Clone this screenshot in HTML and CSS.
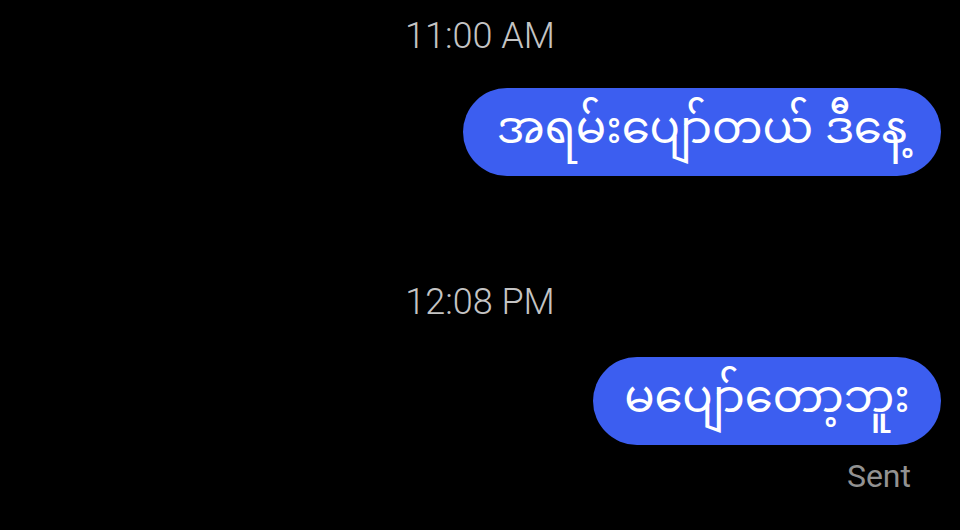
FILE: index.html
```html
<!DOCTYPE html>
<html lang="my">
<head>
    <meta charset="UTF-8">
    <meta name="viewport" content="width=device-width, initial-scale=1.0">
    <title>Messages</title>
    <link rel="stylesheet" href="styles.css">
</head>
<body>
    <div class="thread">
        <div class="time first">11:00 AM</div>
        <div class="row">
            <div class="bubble wide">အရမ်းပျော်တယ် ဒီနေ့</div>
        </div>
        <div class="time second">12:08 PM</div>
        <div class="row">
            <div class="bubble narrow">မပျော်တော့ဘူး</div>
        </div>
        <div class="status">Sent</div>
    </div>
</body>
</html>
```

FILE: styles.css
```css
body {
    margin: 0;
    padding: 0;
    background-color: #000;
    font-family: Roboto, "Liberation Sans", sans-serif;
    width: 960px;
    height: 530px;
    overflow: hidden;
}
.thread {
    display: flex;
    flex-direction: column;
}
.time {
    text-align: center;
    color: #c4c4c4;
    font-size: 36px;
    font-weight: 300;
    line-height: 40px;
}
.first {
    margin-top: 16px;
    margin-bottom: 32px;
}
.second {
    margin-top: 106px;
    margin-bottom: 35px;
}
.row {
    display: flex;
    justify-content: flex-end;
    padding-right: 19px;
}
.bubble {
    background-color: #3c5ef0;
    color: #fff;
    font-family: "Noto Sans Myanmar", "Padauk", "Myanmar Text", "Noto Sans", sans-serif;
    font-size: 45px;
    height: 88px;
    border-radius: 44px;
    display: flex;
    align-items: center;
    justify-content: center;
    box-sizing: border-box;
}
.wide {
    width: 478px;
}
.narrow {
    width: 348px;
}
.status {
    align-self: flex-end;
    margin-right: 49px;
    margin-top: 12px;
    color: #929292;
    font-size: 32px;
    line-height: 38px;
}
```
